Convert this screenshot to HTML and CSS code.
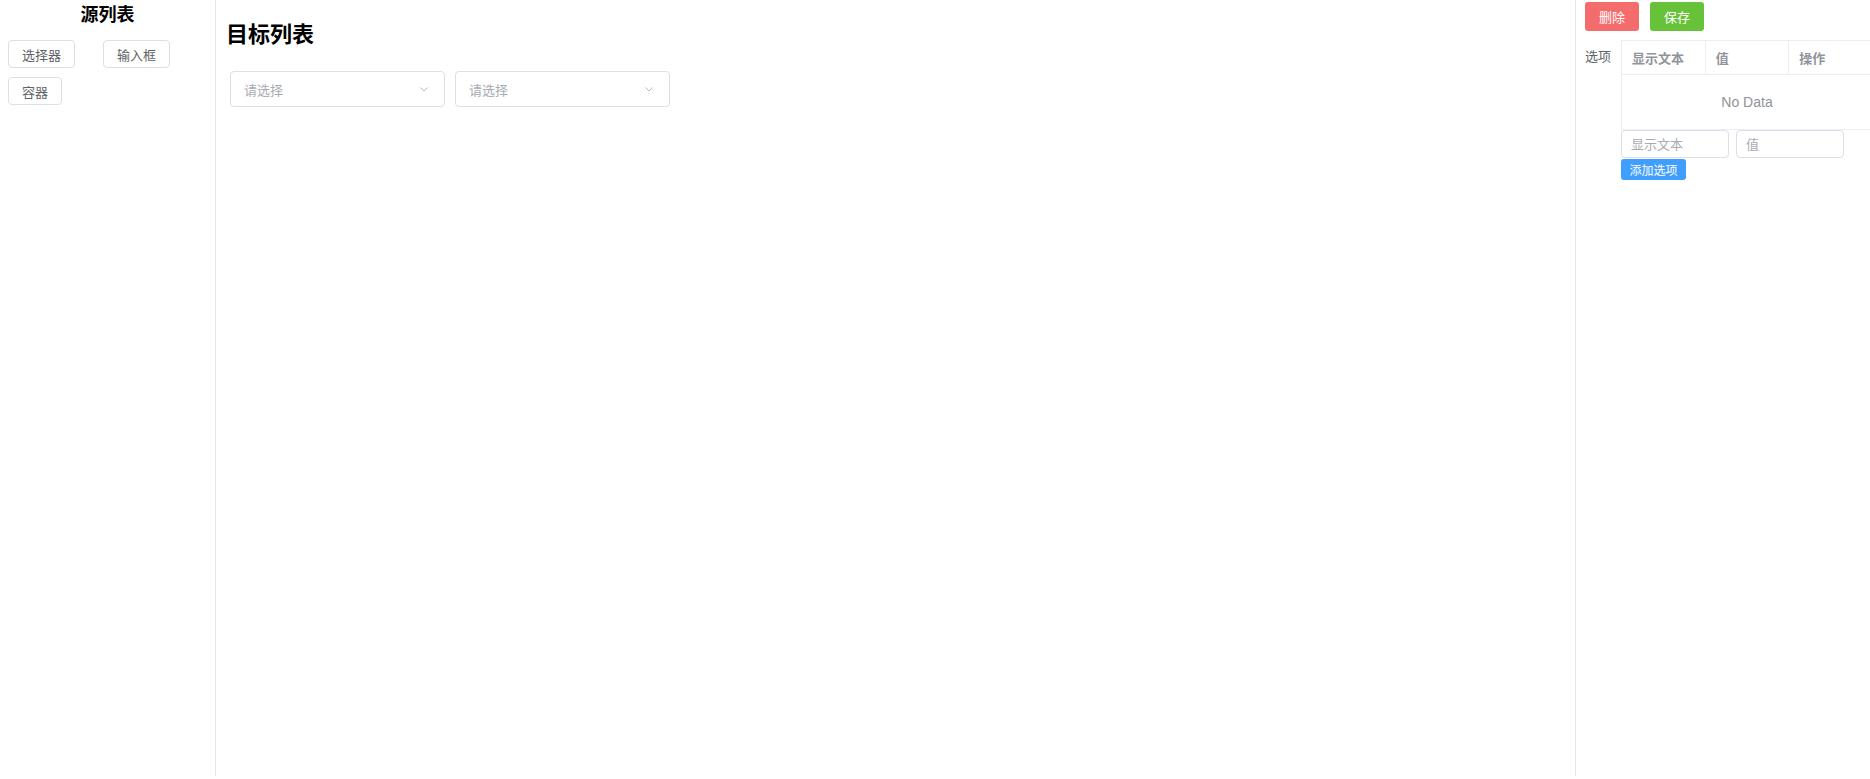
FILE: index.html
```html
<!DOCTYPE html>
<html lang="zh-CN">
<head>
    <meta charset="UTF-8">
    <meta name="viewport" content="width=device-width, initial-scale=1.0">
    <title>表单设计</title>
    <link rel="stylesheet" href="styles.css">
</head>
<body>
    <div class="layout">
        <div class="source-panel">
            <h3 class="source-title">源列表</h3>
            <div class="source-list">
                <button class="source-item">选择器</button>
                <button class="source-item">输入框</button>
                <button class="source-item">容器</button>
            </div>
        </div>

        <div class="target-panel">
            <h2 class="target-title">目标列表</h2>
            <div class="target-list">
                <div class="select">
                    <span class="select-placeholder">请选择</span>
                    <svg class="select-arrow" width="12" height="12" viewBox="0 0 12 12"><path d="M2.5 4.5 L6 8 L9.5 4.5" fill="none" stroke="#b4b7bd" stroke-width="1"/></svg>
                </div>
                <div class="select">
                    <span class="select-placeholder">请选择</span>
                    <svg class="select-arrow" width="12" height="12" viewBox="0 0 12 12"><path d="M2.5 4.5 L6 8 L9.5 4.5" fill="none" stroke="#b4b7bd" stroke-width="1"/></svg>
                </div>
            </div>
        </div>

        <div class="prop-panel">
            <div class="prop-actions">
                <button class="btn btn-danger">删除</button>
                <button class="btn btn-success">保存</button>
            </div>
            <div class="prop-row">
                <label class="prop-label">选项</label>
                <div class="prop-content">
                    <table class="opt-table">
                        <thead>
                            <tr><th>显示文本</th><th>值</th><th>操作</th></tr>
                        </thead>
                        <tbody>
                            <tr><td colspan="3" class="empty">No Data</td></tr>
                        </tbody>
                    </table>
                    <div class="opt-inputs">
                        <input class="opt-input" type="text" placeholder="显示文本">
                        <input class="opt-input" type="text" placeholder="值">
                    </div>
                    <button class="btn-add">添加选项</button>
                </div>
            </div>
        </div>
    </div>
</body>
</html>
```

FILE: styles.css
```css
body {
    margin: 0;
    font-family: "Liberation Sans", "Noto Sans CJK SC", sans-serif;
    background: #fff;
    color: #303133;
}

.layout {
    display: flex;
    height: 776px;
}

.source-panel {
    width: 215px;
    border-right: 1px solid #e4e7ed;
    box-sizing: content-box;
}

.source-title {
    margin: 3px 0 0;
    font-size: 18px;
    line-height: 24px;
    text-align: center;
    color: #000;
}

.source-list {
    display: grid;
    grid-template-columns: 95px 95px;
    row-gap: 9px;
    padding: 13px 0 0 8px;
    justify-items: start;
}

.source-item {
    height: 28px;
    padding: 0 13px;
    border: 1px solid #dcdfe6;
    border-radius: 4px;
    background: #fff;
    color: #606266;
    font-family: inherit;
    font-size: 13px;
}

.target-panel {
    flex: 1;
    padding: 0 10px;
}

.target-title {
    margin: 21px 0 0;
    font-size: 22px;
    line-height: 28px;
    color: #000;
}

.target-list {
    display: flex;
    gap: 10px;
    margin: 22px 0 0 4px;
}

.select {
    width: 215px;
    height: 36px;
    box-sizing: border-box;
    border: 1px solid #dcdfe6;
    border-radius: 4px;
    display: flex;
    align-items: center;
    justify-content: space-between;
    padding: 0 14px 0 13px;
}

.select-placeholder {
    font-size: 13px;
    color: #a8abb2;
}

.prop-panel {
    width: 295px;
    border-left: 1px solid #e4e7ed;
    overflow: hidden;
    padding-left: 9px;
    box-sizing: border-box;
}

.prop-actions {
    display: flex;
    gap: 11px;
    margin-top: 2px;
}

.btn {
    width: 54px;
    height: 29px;
    border: none;
    border-radius: 3px;
    color: #fff;
    font-family: inherit;
    font-size: 13px;
}

.btn-danger {
    background: #f56c6c;
}

.btn-success {
    background: #67c23a;
}

.prop-row {
    display: flex;
    margin-top: 9px;
}

.prop-label {
    width: 36px;
    flex: none;
    font-size: 13px;
    color: #606266;
    padding-top: 6px;
}

.opt-table {
    width: 252px;
    border-collapse: collapse;
    border: 1px solid #ebeef5;
    font-size: 13px;
}

.opt-table th {
    height: 34px;
    padding: 0 0 0 10px;
    text-align: left;
    color: #909399;
    border: 1px solid #ebeef5;
    width: 84px;
    box-sizing: border-box;
}

.opt-table td.empty {
    height: 52px;
    text-align: center;
    color: #909399;
    font-size: 14px;
    border: 1px solid #ebeef5;
}

.opt-inputs {
    display: flex;
    gap: 7px;
}

.opt-input {
    width: 108px;
    height: 28px;
    box-sizing: border-box;
    border: 1px solid #dcdfe6;
    border-radius: 4px;
    padding: 0 9px;
    font-family: inherit;
    font-size: 13px;
    color: #606266;
}

.opt-input::placeholder {
    color: #a8abb2;
}

.btn-add {
    display: block;
    margin-top: 1px;
    width: 65px;
    height: 21px;
    padding: 0;
    border: none;
    border-radius: 3px;
    background: #409eff;
    color: #fff;
    font-family: inherit;
    font-size: 12px;
}
```
